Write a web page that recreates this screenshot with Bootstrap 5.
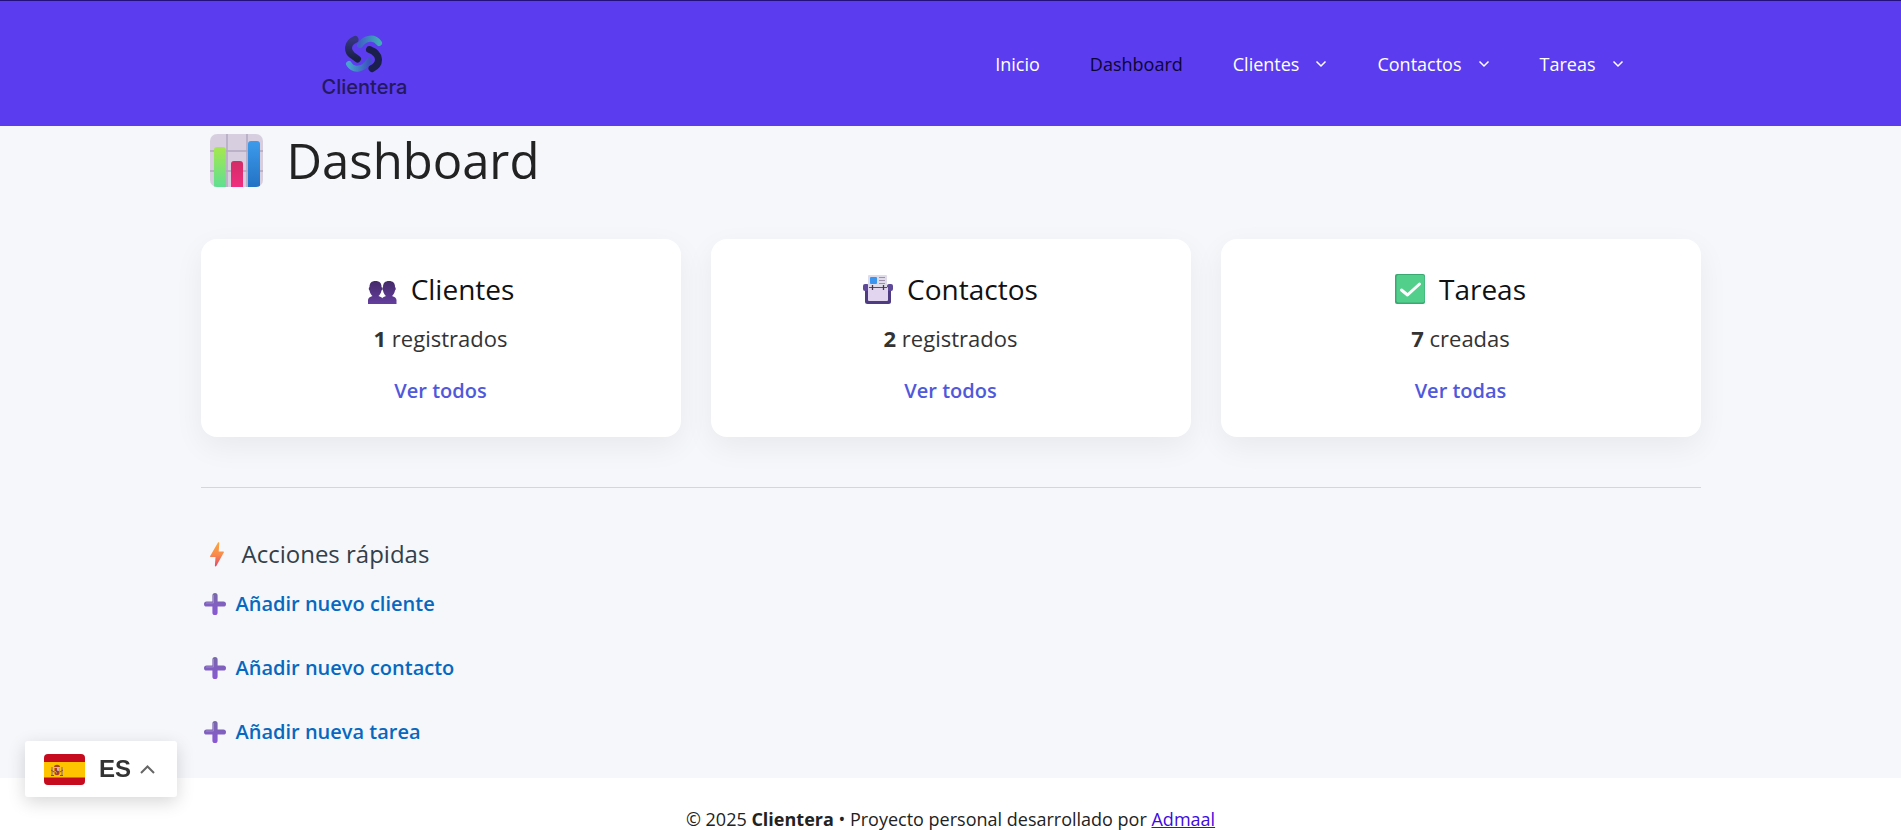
<!DOCTYPE html>
<html lang="es">
<head>
<meta charset="utf-8">
<meta name="viewport" content="width=device-width, initial-scale=1">
<title>Dashboard – Clientera</title>
<link rel="stylesheet" href="https://cdn.jsdelivr.net/npm/bootstrap@5.3.0/dist/css/bootstrap.min.css">
<style>
  body { font-family: "Open Sans", "Noto Sans", sans-serif; font-size: 18px; color: #222; background: #fff; }
  .site-header { background: #5b3cee; border-top: 1px solid #24107a; min-height: 126px; }
  .header-inner { max-width: 1400px; }
  .brand { padding: 4px 0 0 71px; font-family: Inter, sans-serif; font-weight: 500; font-size: 20px; line-height: 20px; color: #24185f; text-decoration: none; }
  .brand:hover { color: #24185f; }
  .main-menu { gap: 50px; font-size: 18px; line-height: 26px; padding-right: 27px; }
  .main-menu .nav-link { padding: 0; color: #fff; }
  .main-menu .nav-link.active { color: #0c0433; }
  .page { background: #f5f7fb; }
  .page-inner { max-width: 1530px; padding: 0 15px 30px; }
  .page-title { font-size: 49px; line-height: 68px; font-weight: 400; padding-left: 9px; gap: 24px; margin-bottom: 45px; }
  .stats { --bs-gutter-x: 30px; --bs-gutter-y: 30px; }
  .stat { border: 0; border-radius: 16px; padding: 30px 24px; box-shadow: 0 10px 30px rgba(0,0,0,.06); text-align: center; }
  .stat h2 { font-size: 28px; line-height: 40px; font-weight: 400; gap: 14px; margin-bottom: 12px; color: #111; }
  .stat p { font-size: 22px; line-height: 34px; color: #333; margin-bottom: 20px; }
  .stat a { font-size: 20px; line-height: 32px; font-weight: 600; color: #5058dc; text-decoration: none; }
  .divider { margin: 50px 0 48px; border-top: 1px solid #d3d6dc; opacity: 1; }
  .quick-title { font-size: 24px; line-height: 36px; font-weight: 400; color: #333f4a; padding-left: 9px; gap: 18px; margin-bottom: 16px; }
  .quick { gap: 32px; }
  .quick a { font-size: 20px; line-height: 32px; font-weight: 600; color: #0668bf; text-decoration: none; gap: 10px; padding-left: 3px; }
  .site-footer { padding-top: 30px; line-height: 22px; }
  .site-footer a { color: #3d0be0; }
  .lang { left: 25px; bottom: 33px; width: 152px; height: 56px; padding: 0 19px; gap: 0; border: 0; border-radius: 3px; background: #fff; color: #333; font: bold 24px "Liberation Sans", Arial, sans-serif; box-shadow: 0 5px 18px rgba(0,0,0,.16); }
  .lang span { margin: 0 9px 0 14px; }
</style>
</head>
<body>
<svg width="0" height="0" class="position-absolute" aria-hidden="true">
  <defs>
    <linearGradient id="gPlus" x1="0" y1="0" x2="0" y2="1"><stop offset="0" stop-color="#7768a8"/><stop offset="1" stop-color="#8a58d6"/></linearGradient>
    <symbol id="plus" viewBox="0 0 22 22"><path d="M11 0a2.600 2.600 0 0 1 2.600 2.600V8.400h5.800a2.600 2.600 0 0 1 0 5.200H13.600v5.800a2.600 2.600 0 0 1-5.200 0V13.600H2.600a2.600 2.600 0 0 1 0-5.200H8.400V2.600A2.600 2.600 0 0 1 11 0z" fill="url(#gPlus)"/><path d="M2.500 10H9.500V2.500" fill="none" stroke="#9c8ac9" stroke-width="1" stroke-linecap="round"/></symbol>
    <symbol id="caret" viewBox="0 0 12 8"><path d="M1.500 1.500 6 6l4.500-4.500" fill="none" stroke="#fff" stroke-width="1.500"/></symbol>
  </defs>
</svg>

<header class="site-header d-flex align-items-center">
  <div class="header-inner container-fluid px-0 d-flex flex-wrap align-items-center justify-content-between">
    <a class="brand d-flex flex-column align-items-center" href="#">
      <svg class="mb-1" width="38" height="38" viewBox="0 0 38 38" fill="none" stroke-linecap="round" aria-hidden="true">
        <defs>
          <linearGradient id="gA" x1="0" y1="0" x2="1" y2="0"><stop offset="0" stop-color="#3f63c4"/><stop offset="1" stop-color="#3fabb8"/></linearGradient>
          <linearGradient id="gB" x1="0" y1="0" x2="1" y2="0"><stop offset="0" stop-color="#48a4cd"/><stop offset="1" stop-color="#3c55bd"/></linearGradient>
          <linearGradient id="gC" x1="0" y1="0" x2="0" y2="1"><stop offset="0" stop-color="#363580"/><stop offset="1" stop-color="#182044"/></linearGradient>
        </defs>
        <path d="M15 10C20 3 29 1 34 8" stroke="url(#gA)" stroke-width="6"/>
        <path d="M24 26C19 34 9 37 4 29" stroke="url(#gB)" stroke-width="6"/>
        <path d="M10 4.500C2 8 2 16 7 20L12.500 24" stroke="url(#gC)" stroke-width="7"/>
        <path d="M24.500 14.500C36 19 36 29 27 33.500" stroke="#1b1f4d" stroke-width="7"/>
      </svg>
      <span>Clientera</span>
    </a>
    <nav aria-label="Principal">
      <ul class="main-menu nav">
        <li><a class="nav-link" href="#">Inicio</a></li>
        <li><a class="nav-link active" aria-current="page" href="#">Dashboard</a></li>
        <li><a class="nav-link d-flex align-items-center" href="#">Clientes<svg class="ms-3" width="12" height="8" aria-hidden="true"><use href="#caret"/></svg></a></li>
        <li><a class="nav-link d-flex align-items-center" href="#">Contactos<svg class="ms-3" width="12" height="8" aria-hidden="true"><use href="#caret"/></svg></a></li>
        <li><a class="nav-link d-flex align-items-center" href="#">Tareas<svg class="ms-3" width="12" height="8" aria-hidden="true"><use href="#caret"/></svg></a></li>
      </ul>
    </nav>
  </div>
</header>

<main class="page">
  <div class="page-inner container-fluid">
    <h1 class="page-title d-flex align-items-center">
      <svg width="53" height="53" viewBox="0 0 53 53" aria-hidden="true">
        <defs>
          <clipPath id="chartClip"><rect width="53" height="53" rx="7"/></clipPath>
          <linearGradient id="gG" x1="0" y1="0" x2="0" y2="1"><stop offset="0" stop-color="#a5e84e"/><stop offset="1" stop-color="#5fdf91"/></linearGradient>
          <linearGradient id="gR" x1="0" y1="0" x2="0" y2="1"><stop offset="0" stop-color="#d22c66"/><stop offset="1" stop-color="#f02c80"/></linearGradient>
          <linearGradient id="gU" x1="0" y1="0" x2="0" y2="1"><stop offset="0" stop-color="#3d9bec"/><stop offset="1" stop-color="#2372c4"/></linearGradient>
        </defs>
        <g clip-path="url(#chartClip)">
          <rect width="53" height="53" fill="#d7cfdf"/>
          <path d="M17 0v53M37 0v53M0 17h53M0 37h53" stroke="#b3a8bf" stroke-width="1.500"/>
          <path d="M4 53V16a3 3 0 0 1 3-3h6a3 3 0 0 1 3 3v37z" fill="url(#gG)"/>
          <path d="M21 53V30a3 3 0 0 1 3-3h6a3 3 0 0 1 3 3v23z" fill="url(#gR)"/>
          <path d="M38 53V10a3 3 0 0 1 3-3h6a3 3 0 0 1 3 3v43z" fill="url(#gU)"/>
        </g>
      </svg>
      Dashboard
    </h1>

    <div class="stats row row-cols-1 row-cols-md-3">
      <div class="col">
        <section class="stat card h-100">
          <h2 class="d-flex align-items-center justify-content-center">
            <svg width="30" height="32" viewBox="0 0 30 32" aria-hidden="true">
              <defs><linearGradient id="gP" x1="0" y1="0" x2="0" y2="1"><stop offset="0" stop-color="#432a68"/><stop offset="1" stop-color="#653e9e"/></linearGradient></defs>
              <path id="person" fill="url(#gP)" d="M2.500 14c0-4 2-6 6-6s6 2 6 6c1 .5 1 3 0 3.500-.5 3-2 4.500-3 5.500 2.500.8 4.500 2 4.500 4v4H1v-4c0-2 2-3.200 4.500-4-1-1-2.500-2.500-3-5.500-1-.5-1-3 0-3.500z"/>
              <use href="#person" x="13.500"/>
            </svg>
            Clientes
          </h2>
          <p><strong>1</strong> registrados</p>
          <a href="#">Ver todos</a>
        </section>
      </div>
      <div class="col">
        <section class="stat card h-100">
          <h2 class="d-flex align-items-center justify-content-center">
            <svg width="30" height="30" viewBox="0 0 30 30" aria-hidden="true">
              <rect x="2" y="12" width="26" height="18" rx="2.500" fill="#4e3b82"/>
              <rect x="0" y="10" width="6" height="7" rx="2" fill="#5e4898"/><rect x="24" y="10" width="6" height="7" rx="2" fill="#5e4898"/>
              <rect x="5" y="1" width="19" height="14" rx="1" fill="#dfdbe8"/>
              <rect x="7" y="3" width="7" height="7" rx="1" fill="#3b94ee"/>
              <path d="M16 3.500h6M16 6.500h6M16 9.500h6" stroke="#9f90ae"/>
              <rect x="5" y="13" width="20" height="14" rx="1" fill="#e2d5f0"/>
              <path d="M6 13.500h18" stroke="#5a4a68"/><path d="M9.500 11v5M20.500 11v5" stroke="#44364e" stroke-width="1.300"/>
            </svg>
            Contactos
          </h2>
          <p><strong>2</strong> registrados</p>
          <a href="#">Ver todos</a>
        </section>
      </div>
      <div class="col">
        <section class="stat card h-100">
          <h2 class="d-flex align-items-center justify-content-center">
            <svg width="30" height="30" viewBox="0 0 30 30" aria-hidden="true">
              <rect width="30" height="30" rx="2" fill="#3aa871"/><rect x="1.500" y="1" width="28" height="27.500" rx="2" fill="#52d08b"/>
              <path d="M6.500 16 12.500 21 24.500 10" fill="none" stroke="#fff" stroke-width="3" stroke-linecap="round" stroke-linejoin="round"/>
            </svg>
            Tareas
          </h2>
          <p><strong>7</strong> creadas</p>
          <a href="#">Ver todas</a>
        </section>
      </div>
    </div>

    <hr class="divider">

    <h3 class="quick-title d-flex align-items-center">
      <svg width="14" height="25" viewBox="0 0 14 25" aria-hidden="true">
        <defs><linearGradient id="gZ" x1="0" y1="0" x2="0" y2="1"><stop offset="0" stop-color="#fba63c"/><stop offset=".5" stop-color="#f98c4c"/><stop offset="1" stop-color="#e2456a"/></linearGradient></defs>
        <path d="M8 .6C8.400.1 9.300.2 9.300 1L8.700 9.500h4.600c.6 0 .8.500.5 1L6.300 24c-.5.800-1.500.5-1.400-.4L5.500 15H.8c-.6 0-.9-.5-.6-1z" fill="url(#gZ)"/>
      </svg>
      Acciones rápidas
    </h3>
    <ul class="quick list-unstyled d-flex flex-column align-items-start mb-0">
      <li><a class="d-flex align-items-center" href="#"><svg width="22" height="22" aria-hidden="true"><use href="#plus"/></svg>Añadir nuevo cliente</a></li>
      <li><a class="d-flex align-items-center" href="#"><svg width="22" height="22" aria-hidden="true"><use href="#plus"/></svg>Añadir nuevo contacto</a></li>
      <li><a class="d-flex align-items-center" href="#"><svg width="22" height="22" aria-hidden="true"><use href="#plus"/></svg>Añadir nueva tarea</a></li>
    </ul>
  </div>
</main>

<footer class="site-footer text-center">© 2025 <strong>Clientera</strong> • Proyecto personal desarrollado por <a href="#">Admaal</a></footer>

<button type="button" class="lang position-fixed d-flex align-items-center" aria-label="Idioma: ES">
  <svg width="41" height="31" viewBox="0 0 41 31" aria-hidden="true">
    <defs><clipPath id="flagClip"><rect width="41" height="31" rx="4"/></clipPath></defs>
    <g clip-path="url(#flagClip)">
      <rect width="41" height="31" fill="#c60b1e"/><rect y="8" width="41" height="15.500" fill="#ffc400"/>
      <path d="M8 13v8M18 13v8" stroke="#a9825f" stroke-width="1.500"/>
      <path d="M10.500 14h5v5c0 3-5 3-5 0z" fill="#b3382c"/><path d="M13 14h2.500v3H13z" fill="#d5b2a5"/><path d="M10.500 17H13v3z" fill="#e5a52e"/>
      <path d="M10 13c0-3 6-3 6 0z" fill="#a4402c"/><path d="M7 16l3 2M19 16l-3 2M7 21.500h3M16 21.500h3" stroke="#8a4b32"/>
      <circle cx="13" cy="17.500" r="1" fill="#3d4f9c"/>
    </g>
  </svg>
  <span>ES</span>
  <svg width="15" height="9" viewBox="0 0 15 9" aria-hidden="true"><path d="M1 8 7.500 1.500 14 8" fill="none" stroke="#666" stroke-width="2"/></svg>
</button>
<script src="https://cdn.jsdelivr.net/npm/bootstrap@5.3.0/dist/js/bootstrap.bundle.min.js"></script>
</body>
</html>
